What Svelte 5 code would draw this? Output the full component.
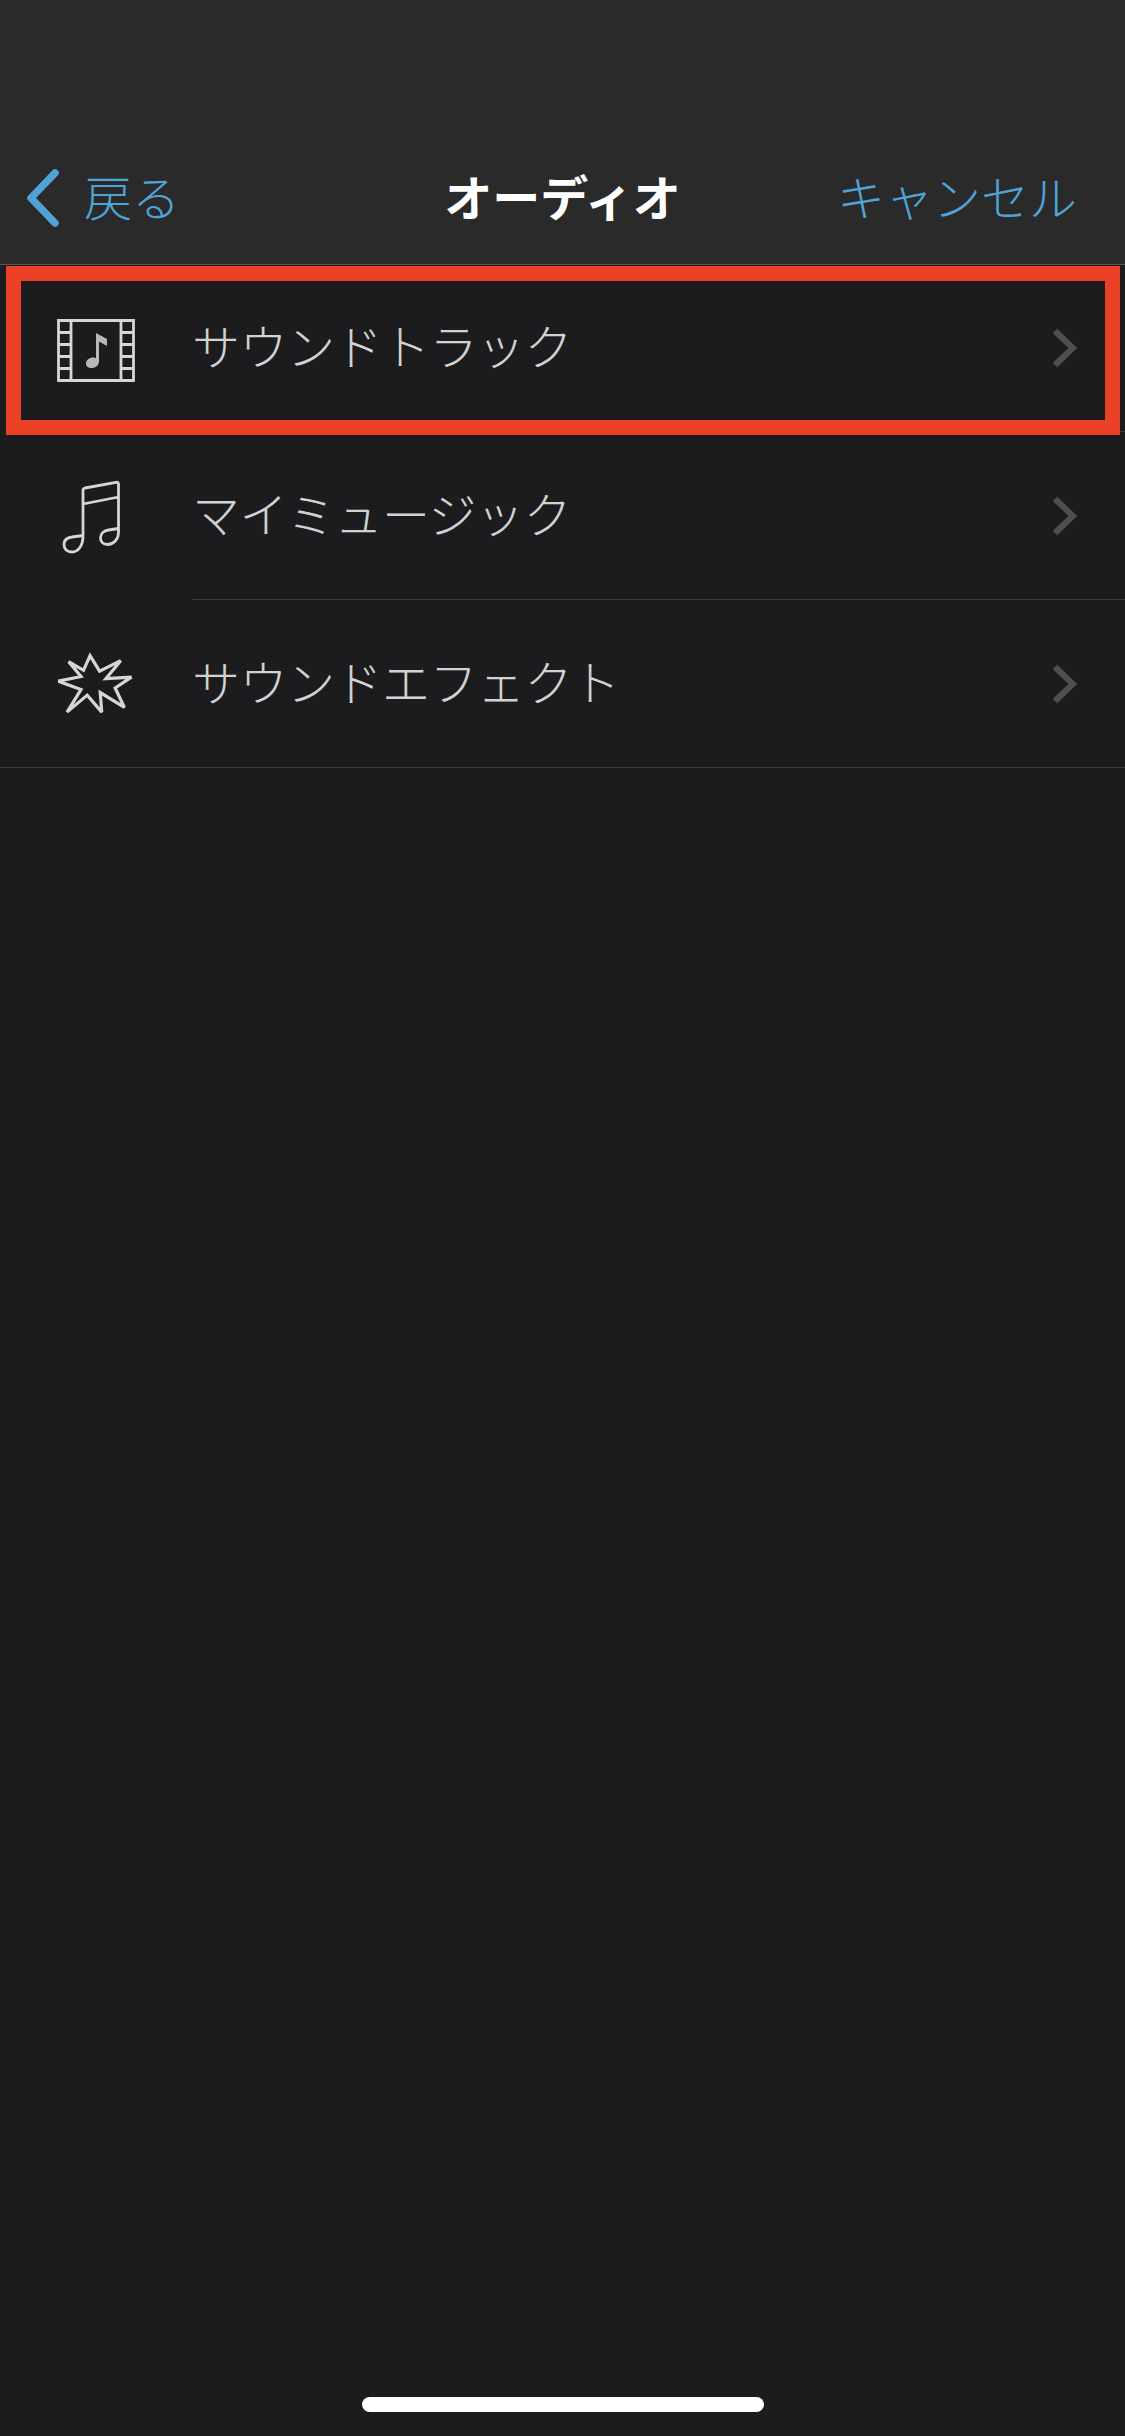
<script>
  const rows = [
    { label: 'サウンドトラック', icon: 'film' },
    { label: 'マイミュージック', icon: 'notes' },
    { label: 'サウンドエフェクト', icon: 'burst' }
  ]
</script>

<div class="screen">
  <header class="nav">
    <button class="back">
      <svg class="back-icon" viewBox="0 0 40 64" aria-hidden="true">
        <path d="M31 7 L7 32 L31 57" />
      </svg>
      <span>戻る</span>
    </button>
    <h1>オーディオ</h1>
    <button class="cancel">キャンセル</button>
  </header>

  <main class="list">
    {#each rows as row}
      <div class="row" class:last={row.icon === 'burst'}>
        {#if row.icon === 'film'}
          <svg class="icon" viewBox="0 -3 120 100" aria-hidden="true">
            <path class="line square" d="M18.5 19.5H93.5V79.5H18.5ZM31 19.5V79.5M81 19.5V79.5M18.5 31.5H31M18.5 43.5H31M18.5 55.5H31M18.5 67.5H31M81 31.5H93.5M81 43.5H93.5M81 55.5H93.5M81 67.5H93.5" />
            <path class="fill" d="M56 32 L67 38 V45 L59 40.5 V60 C59 64.5 55.5 67 51.5 67 C48 67 46 65 46 62.5 C46 59 49.5 56.5 53 56.5 C54.5 56.5 55.5 56.8 56 57.2 Z" />
          </svg>
        {:else if row.icon === 'notes'}
          <svg class="icon" viewBox="0 0 120 100" aria-hidden="true">
            <path class="line" d="M43 70 V24 Q43 22.5 45 22 L76 16.3 Q78.5 16 78.5 18 V66 C78.5 74 73 78.5 67.5 78.5 C63 78.5 60.5 75.5 60.5 72 C60.5 67.5 64 64.5 68.5 64 L78.5 62.5 M43 38 L78.5 31 M43 70 C43 80 38 86 32 86 C27 86 24 83 24 78.5 C24 74 27.5 71.5 32 71 L43 69.5" />
          </svg>
        {:else}
          <svg class="icon" viewBox="0 -2 120 100" aria-hidden="true">
            <path class="line miter" transform="translate(3.8 3.3) scale(.93)" d="M49.7 17.5 L60 34.3 L82.7 23 L66.7 42.3 L94.3 40.7 L76.7 52.3 L86.7 73.3 L60.7 57.3 L62.3 78.3 L46.7 60 L25 78.3 L40 54 L15.7 45 L40 40 L26.7 24 L42.7 33.3 Z" />
          </svg>
        {/if}
        <span class="label">{row.label}</span>
        <svg class="chevron" viewBox="0 0 26 40" aria-hidden="true">
          <path d="M4 3 L22 20 L4 37" />
        </svg>
      </div>
    {/each}
    <div class="highlight"></div>
  </main>

  <div class="home"></div>
</div>

<style>
  :global(body) {
    margin: 0;
    background: #1c1c1e;
  }

  .screen {
    width: 1125px;
    height: 2436px;
    display: flex;
    flex-direction: column;
    background: #1c1c1e;
    font-family: "Noto Sans CJK JP", "Noto Sans", sans-serif;
    font-weight: 300;
    overflow: hidden;
  }

  .nav {
    box-sizing: border-box;
    height: 265px;
    padding: 132px 24px 0;
    display: grid;
    grid-template-columns: 1fr auto 1fr;
    align-items: center;
    background: #2a2a2a;
    border-bottom: 1px solid #555;
  }

  button {
    padding: 0;
    border: 0;
    background: none;
    color: #4fa3d6;
    font: inherit;
    font-size: 48px;
    line-height: 60px;
  }

  .back {
    display: flex;
    align-items: center;
    gap: 20px;
    justify-self: start;
  }

  .back span {
    padding-bottom: 6px;
  }

  .back-icon {
    width: 40px;
    height: 64px;
  }

  .back-icon path {
    fill: none;
    stroke: #4fa3d6;
    stroke-width: 7.5;
    stroke-linecap: round;
    stroke-linejoin: round;
  }

  .cancel {
    justify-self: end;
    margin-right: 24px;
    padding-bottom: 6px;
  }

  h1 {
    margin: 0;
    padding-bottom: 6px;
    color: #fff;
    font-size: 48px;
    font-weight: 700;
    line-height: 60px;
  }

  .list {
    position: relative;
    flex: 1;
    margin-top: -1px;
  }

  .row {
    box-sizing: border-box;
    height: 168px;
    padding: 0 48px 0 40px;
    display: flex;
    align-items: center;
    position: relative;
  }

  .row::after {
    content: '';
    position: absolute;
    left: 192px;
    right: 0;
    bottom: 0;
    height: 1px;
    background: #3b3b3d;
  }

  .row.last::after {
    left: 0;
  }

  .icon {
    width: 120px;
    height: 100px;
    flex: none;
  }

  .line {
    fill: none;
    stroke: #d6d6d6;
    stroke-width: 2.8;
    stroke-linecap: round;
    stroke-linejoin: round;
  }

  .line.square {
    stroke-linecap: butt;
    stroke-linejoin: miter;
  }

  .line.miter {
    stroke-width: 3.4;
    stroke-linejoin: miter;
    stroke-miterlimit: 3;
  }

  .fill {
    fill: #b8b8b8;
  }

  .label {
    margin-left: 32px;
    padding-bottom: 8px;
    flex: 1;
    color: #d2d2d2;
    font-size: 48px;
    line-height: 60px;
    letter-spacing: -0.5px;
  }

  .chevron {
    width: 26px;
    height: 40px;
    flex: none;
  }

  .chevron path {
    fill: none;
    stroke: #4f4f4f;
    stroke-width: 6;
  }

  .highlight {
    position: absolute;
    left: 6px;
    top: 2px;
    width: 1114px;
    height: 169px;
    box-sizing: border-box;
    border: 15.5px solid #e94026;
  }

  .home {
    width: 402px;
    height: 15px;
    margin: 0 auto 24px;
    border-radius: 8px;
    background: #fff;
  }
</style>
